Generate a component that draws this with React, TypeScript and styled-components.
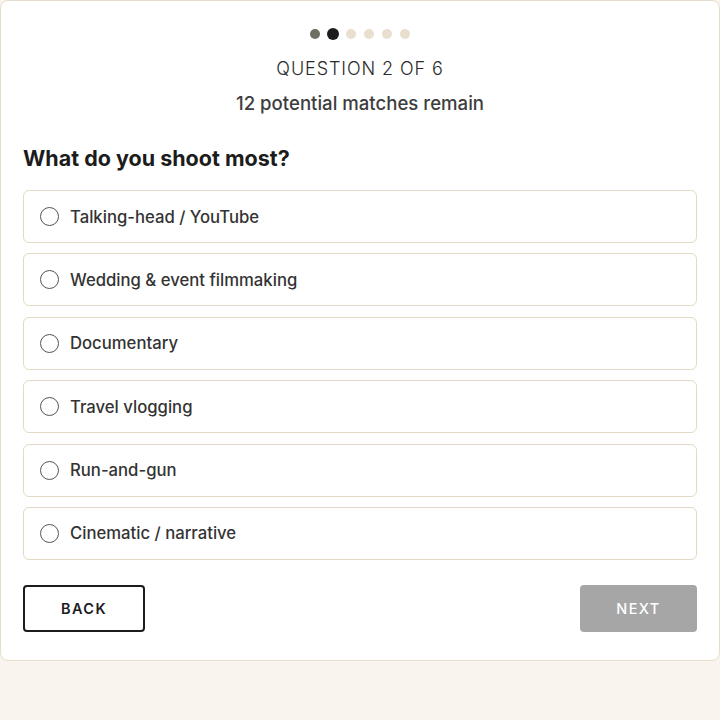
import * as React from 'react';
import styled, { createGlobalStyle } from 'styled-components';

const options: string[] = [
    "Talking-head / YouTube",
    "Wedding & event filmmaking",
    "Documentary",
    "Travel vlogging",
    "Run-and-gun",
    "Cinematic / narrative",
];

const GlobalStyle = createGlobalStyle`
    html, body {
        margin: 0;
        padding: 0;
        background: #f9f4ee;
        font-family: Inter, "Noto Sans", sans-serif;
    }
    * { box-sizing: border-box; }
`;

export default function App() {
    const [selected, setSelected] = React.useState<number | null>(null);
    const current = 1;
    return (
        <>
            <GlobalStyle />
            <Card>
                <Dots>
                    {[0, 1, 2, 3, 4, 5].map((i) => (
                        <Dot key={i} state={i < current ? 'done' : i === current ? 'active' : 'todo'} />
                    ))}
                </Dots>
                <Step>QUESTION 2 OF 6</Step>
                <Remain>12 potential matches remain</Remain>
                <Question>What do you shoot most?</Question>
                <OptionList>
                    {options.map((opt, i) => (
                        <Option key={opt} onClick={() => setSelected(i)}>
                            <Radio checked={selected === i} />
                            <OptionText>{opt}</OptionText>
                        </Option>
                    ))}
                </OptionList>
                <Actions>
                    <BackButton>BACK</BackButton>
                    <NextButton disabled={selected === null}>NEXT</NextButton>
                </Actions>
            </Card>
        </>
    );
}

const Card = styled.div`
    background: #fff;
    border: 1px solid #e6ddcc;
    border-radius: 8px;
    padding: 27px 22px 28px;
    display: flex;
    flex-direction: column;
`;

const Dots = styled.div`
    display: flex;
    justify-content: center;
    align-items: center;
    gap: 8px;
    height: 12px;
`;

const Dot = styled.span<{ state: 'done' | 'active' | 'todo' }>`
    width: ${p => (p.state === 'active' ? 12 : 10)}px;
    height: ${p => (p.state === 'active' ? 12 : 10)}px;
    margin: 0 ${p => (p.state === 'active' ? -1 : 0)}px;
    border-radius: 50%;
    background: ${p => (p.state === 'done' ? '#6e6e62' : p.state === 'active' ? '#1c1c1c' : '#e8dfce')};
`;

const Step = styled.div`
    margin-top: 18px;
    text-align: center;
    font-size: 18px;
    line-height: 22px;
    font-weight: 300;
    letter-spacing: 0.9px;
    color: #2a2a2a;
`;

const Remain = styled.div`
    margin-top: 12px;
    text-align: center;
    font-size: 18.6px;
    line-height: 22px;
    font-weight: 500;
    color: #3d3d3d;
`;

const Question = styled.h2`
    margin: 31px 0 0;
    font-size: 21.5px;
    line-height: 26px;
    font-weight: 700;
    color: #1c1c1c;
`;

const OptionList = styled.div`
    margin-top: 19px;
    display: flex;
    flex-direction: column;
    gap: 10.4px;
`;

const Option = styled.label`
    display: flex;
    align-items: center;
    gap: 11px;
    height: 53px;
    padding: 0 16px;
    border: 1px solid #e2d9c7;
    border-radius: 6px;
    cursor: pointer;
`;

const Radio = styled.span<{ checked: boolean }>`
    width: 19px;
    height: 19px;
    border-radius: 50%;
    border: 1px solid #555;
    box-shadow: ${p => (p.checked ? 'inset 0 0 0 4px #fff' : 'none')};
    background: ${p => (p.checked ? '#1c1c1c' : '#fff')};
    flex-shrink: 0;
`;

const OptionText = styled.span`
    font-size: 16.7px;
    font-weight: 500;
    color: #333;
`;

const Actions = styled.div`
    margin-top: 25px;
    display: flex;
    justify-content: space-between;
`;

const BackButton = styled.button`
    width: 122px;
    height: 47px;
    border: 2px solid #1c1c1c;
    border-radius: 4px;
    background: #fff;
    color: #1c1c1c;
    font-family: Inter, sans-serif;
    font-size: 14.5px;
    font-weight: 600;
    letter-spacing: 1.4px;
`;

const NextButton = styled.button`
    width: 117px;
    height: 47px;
    border: none;
    border-radius: 4px;
    background: #a6a6a6;
    color: #fff;
    font-family: Inter, sans-serif;
    font-size: 14.5px;
    font-weight: 500;
    letter-spacing: 1.4px;
`;
